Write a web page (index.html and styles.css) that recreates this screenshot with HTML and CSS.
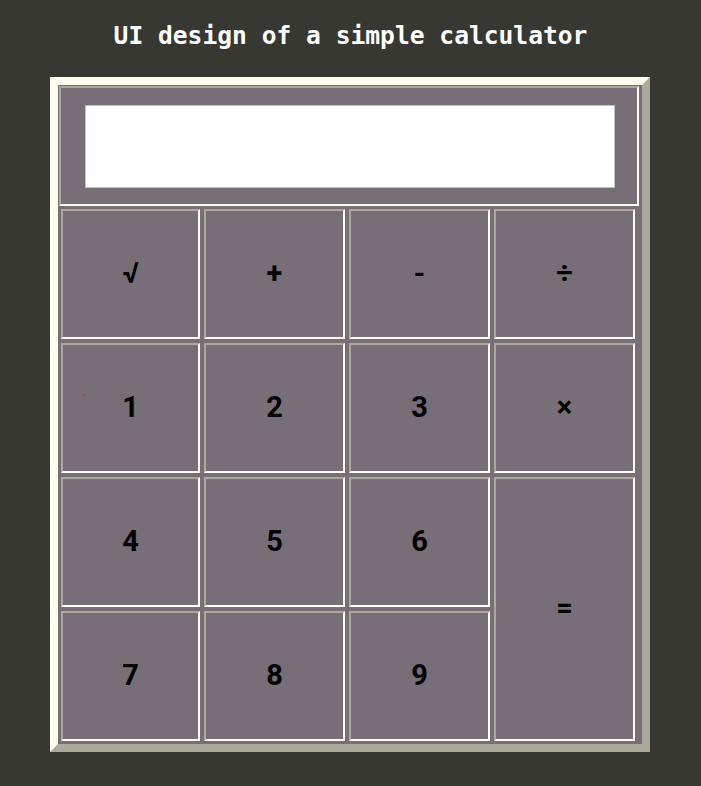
FILE: index.html
```html
<!DOCTYPE html>
<html>
<head>
<meta charset="utf-8">
<title>Calculator</title>
<link rel="stylesheet" href="styles.css">
</head>
<body>
<h1 class="title">UI design of a simple calculator</h1>
<div class="calc">
  <div class="display-cell">
    <div class="screen"></div>
  </div>
  <div class="keys">
    <div class="key">√</div>
    <div class="key">+</div>
    <div class="key">-</div>
    <div class="key">÷</div>
    <div class="key key-one">1<span class="dot"></span></div>
    <div class="key">2</div>
    <div class="key">3</div>
    <div class="key">×</div>
    <div class="key">4</div>
    <div class="key">5</div>
    <div class="key">6</div>
    <div class="key key-eq">=</div>
    <div class="key">7</div>
    <div class="key">8</div>
    <div class="key">9</div>
  </div>
</div>
</body>
</html>
```
FILE: styles.css
```css
html, body {
  margin: 0;
  padding: 0;
  background: #383833;
}
body {
  width: 701px;
  height: 786px;
  overflow: hidden;
}
.title {
  margin: 0;
  height: 77px;
  box-sizing: border-box;
  padding-top: 20px;
  line-height: 32px;
  font-family: "DejaVu Sans Mono", monospace;
  font-weight: bold;
  font-size: 24.6px;
  color: #ffffff;
  text-align: center;
}
.calc {
  margin-left: 50px;
  width: 600px;
  box-sizing: border-box;
  border: 8px solid;
  border-color: #fffff0 #a9aa99 #a9aa99 #fffff0;
  background: #776e77;
  padding: 1px 0 3px 0;
}
.display-cell {
  margin-left: 1px;
  width: 580px;
  height: 120px;
  box-sizing: border-box;
  border: 2px solid;
  border-color: #a9aa99 #fffff0 #fffff0 #a9aa99;
  display: flex;
  align-items: center;
  justify-content: center;
}
.screen {
  width: 530px;
  height: 83px;
  box-sizing: border-box;
  background: #ffffff;
  border: 1px solid #c4bec4;
  margin-left: 1px;
}
.keys {
  margin: 3px 0 0 3px;
  display: grid;
  grid-template-columns: 139px 141px 141px 141px;
  grid-template-rows: repeat(4, 130px);
  gap: 4px;
}
.key {
  position: relative;
  box-sizing: border-box;
  border: 2px solid;
  border-color: #a9aa99 #fffff5 #fffff5 #a9aa99;
  display: flex;
  align-items: center;
  justify-content: center;
  padding-bottom: 3px;
  font-family: Roboto, "Liberation Sans", sans-serif;
  font-weight: bold;
  font-size: 29px;
  color: #000000;
}
.key-eq {
  grid-column: 4;
  grid-row: 3 / span 2;
}
.dot {
  position: absolute;
  left: 20px;
  top: 49px;
  width: 2px;
  height: 2px;
  border-radius: 1px;
  background: #e0304a;
}
```
